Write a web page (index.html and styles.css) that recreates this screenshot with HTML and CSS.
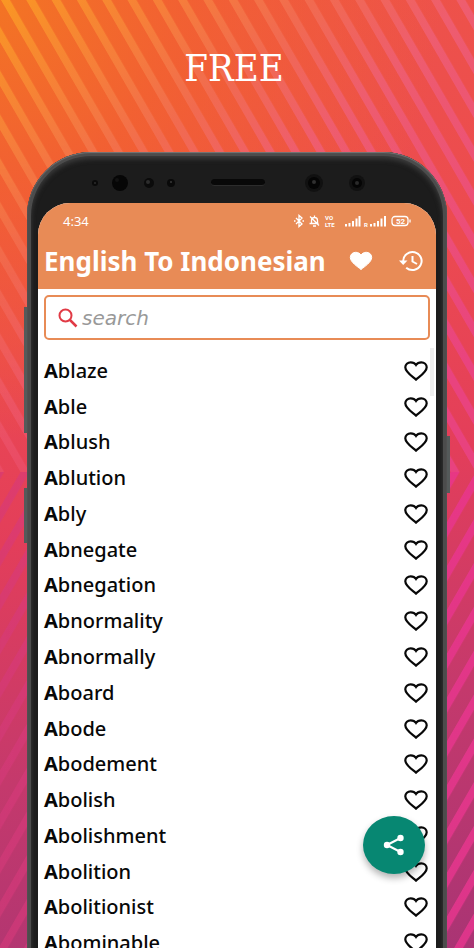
FILE: index.html
```html
<!DOCTYPE html>
<html lang="en">
<head>
<meta charset="utf-8">
<meta name="viewport" content="width=device-width, initial-scale=1">
<title>English To Indonesian</title>
<link rel="stylesheet" href="styles.css">
</head>
<body>
<svg class="stripes" aria-hidden="true">
  <defs>
    <linearGradient id="tint" x1="0" y1="0" x2="380" y2="440" gradientUnits="userSpaceOnUse">
      <stop offset="0" stop-color="#fca024"/>
      <stop offset=".16" stop-color="#f88a38"/>
      <stop offset=".36" stop-color="#f26e56"/>
      <stop offset=".53" stop-color="#ef6078"/>
      <stop offset="1" stop-color="#ea4488"/>
    </linearGradient>
    <linearGradient id="tint-low" x1="0" y1="0" x2="474" y2="0" gradientUnits="userSpaceOnUse">
      <stop offset="0" stop-color="#d63a7a"/>
      <stop offset="1" stop-color="#ea3690"/>
    </linearGradient>
    <linearGradient id="dim" x1="0" y1="0" x2="0" y2="472" gradientUnits="userSpaceOnUse">
      <stop offset=".3" stop-color="#000" stop-opacity="0"/>
      <stop offset="1" stop-color="#000" stop-opacity=".5"/>
    </linearGradient>
    <linearGradient id="dim-low" x1="0" y1="0" x2="474" y2="0" gradientUnits="userSpaceOnUse">
      <stop offset="0" stop-color="#000" stop-opacity=".25"/>
      <stop offset=".6" stop-color="#000" stop-opacity="0"/>
    </linearGradient>
    <pattern id="bars" width="25.3" height="100" patternUnits="userSpaceOnUse" patternTransform="skewX(30)">
      <rect x="1" width="9" height="100" fill="#fff"/>
    </pattern>
    <mask id="cut" maskUnits="userSpaceOnUse" x="0" y="0" width="4000" height="472"><rect width="4000" height="472" fill="url(#bars)"/><rect width="200" height="472" fill="url(#dim)"/></mask>
    <mask id="cut-low" maskUnits="userSpaceOnUse" x="0" y="-1500" width="4000" height="1972"><rect y="-1500" width="4000" height="1972" fill="url(#bars)"/><rect y="-1500" width="4000" height="1972" fill="url(#dim-low)"/></mask>
  </defs>
  <g mask="url(#cut)"><rect width="4000" height="472" fill="url(#tint)"/></g>
  <g transform="translate(0 944) scale(1 -1)"><g mask="url(#cut-low)"><rect y="-1500" width="4000" height="1972" fill="url(#tint-low)"/></g></g>
</svg>
<svg class="defs" aria-hidden="true">
  <symbol id="heart" viewBox="0 0 24 20"><path d="M12 18.600C8.500 15.500 1.300 11.300 1.300 6.300 1.300 3.400 3.700 1.300 6.700 1.300c2.200 0 4.200 1 5.300 2.700 1.100-1.700 3.100-2.700 5.300-2.700 3 0 5.400 2.100 5.400 5 0 5-7.200 9.200-10.700 12.300Z"/></symbol>
</svg>
<h1 class="headline">FREE</h1>
<main class="phone">
  <span class="key key-volume"></span>
  <span class="key key-assist"></span>
  <span class="key key-power"></span>
  <div class="sensors" aria-hidden="true">
    <svg class="lenses" width="100" height="24" viewBox="0 0 100 24">
      <circle cx="11" cy="12" r="3" fill="#0a0a0a"/><circle cx="11" cy="12" r="1" fill="#2c2c2c"/>
      <circle cx="36" cy="12" r="8" fill="#060606"/><circle cx="33" cy="9" r="2" fill="#121212"/>
      <circle cx="65" cy="12" r="5" fill="#0b0b0b"/><circle cx="64" cy="11" r="2" fill="#2d2d2d"/>
      <circle cx="87" cy="12" r="4" fill="#090909"/><circle cx="87" cy="11" r="1" fill="#383838"/>
    </svg>
    <span class="speaker"></span>
    <svg class="lenses" width="74" height="24" viewBox="0 0 74 24">
      <circle cx="14" cy="12" r="9" fill="#111"/><circle cx="14" cy="12" r="6" fill="#050505"/><circle cx="14" cy="11" r="2" fill="#303030"/>
      <circle cx="57" cy="12" r="8" fill="#111"/><circle cx="57" cy="12" r="5" fill="#050505"/><circle cx="57" cy="12" r="2" fill="#2a2a2a"/>
    </svg>
  </div>
  <section class="screen">
    <header class="top">
      <div class="status">
        <time>4:34</time>
        <svg class="status-icons" width="118" height="14" viewBox="0 0 118 14" role="img" aria-label="Bluetooth, muted, VoLTE, two signals, battery 52">
          <g fill="none" stroke="#fff" stroke-width="1.300">
            <path d="M2 4l6 6-3 2.500v-11L8 4l-6 6M0 7h1.500M8.500 7h1.500"/>
            <path d="M15.500 9.500h9M17.500 9.500V6.500a3 3 0 0 1 6 0v3M20.500 3.500v-2M19 12h3M16 2.500l9 9"/>
            <rect x="98" y="2.500" width="16" height="9" rx="3"/><path d="M116 5.500v3"/>
          </g>
          <g fill="#fff" font-family="Roboto, sans-serif" font-weight="700">
            <text x="31" y="6" font-size="6">VO</text><text x="31" y="13" font-size="6">LTE</text>
            <text x="70" y="13" font-size="6">R</text>
            <text x="102" y="10" font-size="8">52</text>
          </g>
          <path fill="#fff" d="M51 10h2v2.500h-2zM54.500 9h2v3.500h-2zM58 7h2v5.500h-2zM61.500 4.500h2v8h-2zM64.500 2h2v10.500h-2zM76 10h2v2.500h-2zM79.500 9h2v3.500h-2zM83 7h2v5.500h-2zM86.500 4.500h2v8h-2zM90 2h2v10.500h-2z"/>
        </svg>
      </div>
      <div class="bar">
        <h2 class="title">English To Indonesian</h2>
        <button class="icon-button" aria-label="Favourites"><svg width="24" height="20" fill="#fff" stroke="#fff"><use href="#heart"/></svg></button>
        <button class="icon-button" aria-label="History"><svg width="25" height="22" viewBox="0 0 25 22" fill="none" stroke="#fff" stroke-width="2"><path d="M4.200 11a9.200 9 0 1 1 3 6.700M13.500 6v5.500l4.500 2.500"/><path d="M0 10.500h8.500L4.200 15z" fill="#fff" stroke="none"/></svg></button>
      </div>
    </header>
    <label class="search">
      <svg width="20" height="20" viewBox="0 0 20 20" fill="none" stroke="#e13a45" stroke-width="2"><circle cx="7.500" cy="7.500" r="6"/><path d="M12 12l6.500 6.500" stroke-width="2.500"/></svg>
      <input type="text" placeholder="search" aria-label="Search">
    </label>
    <ul class="words" id="words"></ul>
    <span class="thumb"></span>
  </section>
  <button class="share" aria-label="Share"><svg width="22" height="22" viewBox="0 0 22 22" fill="#fff"><path d="M4 11L17.500 4M4 11l13.500 7" stroke="#fff" stroke-width="2"/><circle cx="4" cy="11" r="3.200"/><circle cx="17.500" cy="4" r="3.200"/><circle cx="17.500" cy="18" r="3.200"/></svg></button>
</main>
<script src="script.js"></script>
</body>
</html>
```
FILE: styles.css
```css
* { box-sizing: border-box; }
body {
  margin: 0;
  height: 100vh;
  overflow: hidden;
  position: relative;
  display: flex;
  flex-direction: column;
  font-family: "Noto Sans", sans-serif;
  background:
    radial-gradient(circle at 0 0, #f37424 0, rgba(243, 100, 44, .8) 180px, rgba(240, 90, 60, 0) 440px),
    linear-gradient(168deg, #ee5548 0, #ec4a50 32%, #e33e5a 52%, #c4396c 75%, #a93474 100%);
}
.stripes { position: absolute; inset: 0; width: 100%; height: 100%; opacity: .8; }
.defs { position: absolute; width: 0; height: 0; }
.headline {
  position: relative;
  margin: 0;
  height: 152px;
  padding: 44px 6px 0 0;
  font: 400 38px/48px "DejaVu Serif Condensed", "DejaVu Serif", serif;
  text-align: center;
  color: #fff;
}
.phone {
  position: relative;
  flex: 1;
  min-height: 0;
  display: flex;
  flex-direction: column;
  margin: 0 27px -16px;
  padding: 0 11px;
  border-radius: 64px 64px 0 0;
  background: #1c1c1c;
  box-shadow: inset 0 1px 1px #777, inset 0 0 0 4px #4c4c4c, inset 0 3px 5px 4px #3c3c3c;
}
.key { position: absolute; width: 3px; background: #555a5a; }
.key-volume { left: -3px; top: 155px; height: 126px; }
.key-assist { left: -3px; top: 336px; height: 55px; }
.key-power { right: -3px; top: 284px; height: 57px; }
.sensors {
  flex: none;
  display: flex;
  align-items: center;
  height: 51px;
  padding: 10px 62px 0 46px;
}
.lenses { flex: none; }
.speaker { width: 54px; height: 7px; margin: 0 auto 0 27px; border-radius: 4px; background: #080808; border-bottom: 1px solid #2c2c2c; }
.screen {
  position: relative;
  flex: 1;
  min-height: 0;
  overflow: hidden;
  background: #fff;
  border-radius: 32px 32px 0 0;
}
.top { background: #e88b56; color: #fff; height: 86px; }
.status {
  display: flex;
  justify-content: space-between;
  align-items: center;
  height: 36px;
  padding: 0 24px 0 25px;
  font-size: 13px;
}
.bar { display: flex; align-items: center; height: 44px; padding: 0 12px 0 6px; }
.title { flex: 1; margin: 0; font-size: 26px; line-height: 32px; font-weight: 700; white-space: nowrap; }
.icon-button { display: grid; place-items: center; padding: 0; border: 0; background: none; }
.icon-button + .icon-button { margin-left: 26px; }
.search {
  display: flex;
  align-items: center;
  gap: 4px;
  height: 45px;
  margin: 6px 6px 0;
  padding: 0 12px;
  border: 2px solid #e88b56;
  border-radius: 5px;
}
.search input {
  flex: 1;
  min-width: 0;
  padding: 0;
  border: 0;
  outline: 0;
  background: none;
  font: italic 20px/24px "DejaVu Sans", sans-serif;
}
.search input::placeholder { color: #999; opacity: 1; }
.words {
  display: grid;
  grid-template-rows: repeat(17, 1fr);
  min-height: 608px;
  margin: 13px 6px 0;
  padding: 0;
  list-style: none;
}
.words li { display: flex; align-items: center; justify-content: space-between; font-size: 20px; line-height: 24px; font-weight: 500; color: #080808; }
.words span::first-letter { font-weight: 700; }
.like { display: grid; padding: 0; border: 0; background: none; margin-right: 2px; }
.thumb { position: absolute; top: 145px; right: 2px; width: 4px; height: 48px; background: #eee; }
.share {
  position: absolute;
  right: 22px;
  bottom: 90px;
  width: 62px;
  height: 58px;
  display: grid;
  place-items: center;
  padding: 0;
  border: 0;
  border-radius: 50%;
  background: #078772;
  box-shadow: 0 4px 7px rgba(0, 0, 0, .3);
}
```
FILE: script.js
```js
const words = ["Ablaze", "Able", "Ablush", "Ablution", "Ably", "Abnegate", "Abnegation",
  "Abnormality", "Abnormally", "Aboard", "Abode", "Abodement", "Abolish", "Abolishment",
  "Abolition", "Abolitionist", "Abominable"];
document.getElementById("words").innerHTML = words.map(word =>
  `<li><span>${word}</span><button class="like" aria-label="Like ${word}"><svg width="24" height="20" fill="none" stroke="#080808" stroke-width="2.200"><use href="#heart"/></svg></button></li>`
).join("");
```
